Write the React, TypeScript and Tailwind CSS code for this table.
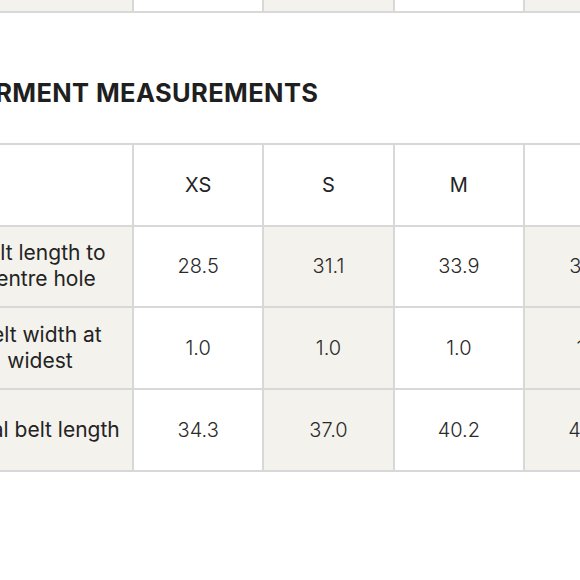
import React from "react";

const sizes = ["XS", "S", "M", "L", "XL"];

const rows: { label: string[]; values: string[] }[] = [
  { label: ["Belt length to", "centre hole"], values: ["28.5", "31.1", "33.9", "36.7", "39.5"] },
  { label: ["Belt width at", "widest"], values: ["1.0", "1.0", "1.0", "1.0", "1.0"] },
  { label: ["Total belt length"], values: ["34.3", "37.0", "40.2", "43.0", "45.8"] },
];

// alternate column tint, label column always tinted
const tint = (i: number) => (i % 2 === 1 ? "bg-[#f4f2ec]" : "bg-white");

const Cell: React.FC<{ className?: string; children?: React.ReactNode }> = ({ className, children }) => (
  <div className={`h-[79.75px] flex flex-col items-center justify-center text-center leading-[26px] ${className ?? ""}`}>
    {children}
  </div>
);

export default function App() {
  return (
    <div className="w-[580px] h-[580px] overflow-hidden bg-white font-['Inter',sans-serif] text-[20px] text-[#232323]">
      <div className="-ml-[54px] w-[840px]">
        {/* last row of the previous table */}
        <div className="-mt-[69px] grid grid-cols-[184px_repeat(5,128.33px)] gap-x-[2px] bg-[#d8d8d8] pb-[2px] px-[2px]">
          <Cell className="bg-[#f4f2ec]" />
          {sizes.map((s, i) => (
            <Cell key={s} className={tint(i)} />
          ))}
        </div>

        <h2 className="mt-[64px] pl-[11px] text-[25.5px] leading-[32px] font-bold tracking-[0.015em] text-[#1f1f1f]">
          GARMENT MEASUREMENTS
        </h2>

        <div className="mt-[34px] grid grid-cols-[184px_repeat(5,128.33px)] gap-[2px] bg-[#d8d8d8] p-[2px]">
          <Cell className="bg-white" />
          {sizes.map((s) => (
            <Cell key={s} className="bg-white">
              {s}
            </Cell>
          ))}
          {rows.map((row) => (
            <React.Fragment key={row.label.join(" ")}>
              <Cell className="bg-[#f4f2ec] text-[21px] font-[420]">
                {row.label.map((l) => (
                  <span key={l}>{l}</span>
                ))}
              </Cell>
              {row.values.map((v, i) => (
                <Cell key={i} className={`${tint(i)} font-light text-[#2a2a2a]`}>
                  {v}
                </Cell>
              ))}
            </React.Fragment>
          ))}
        </div>
      </div>
    </div>
  );
}
